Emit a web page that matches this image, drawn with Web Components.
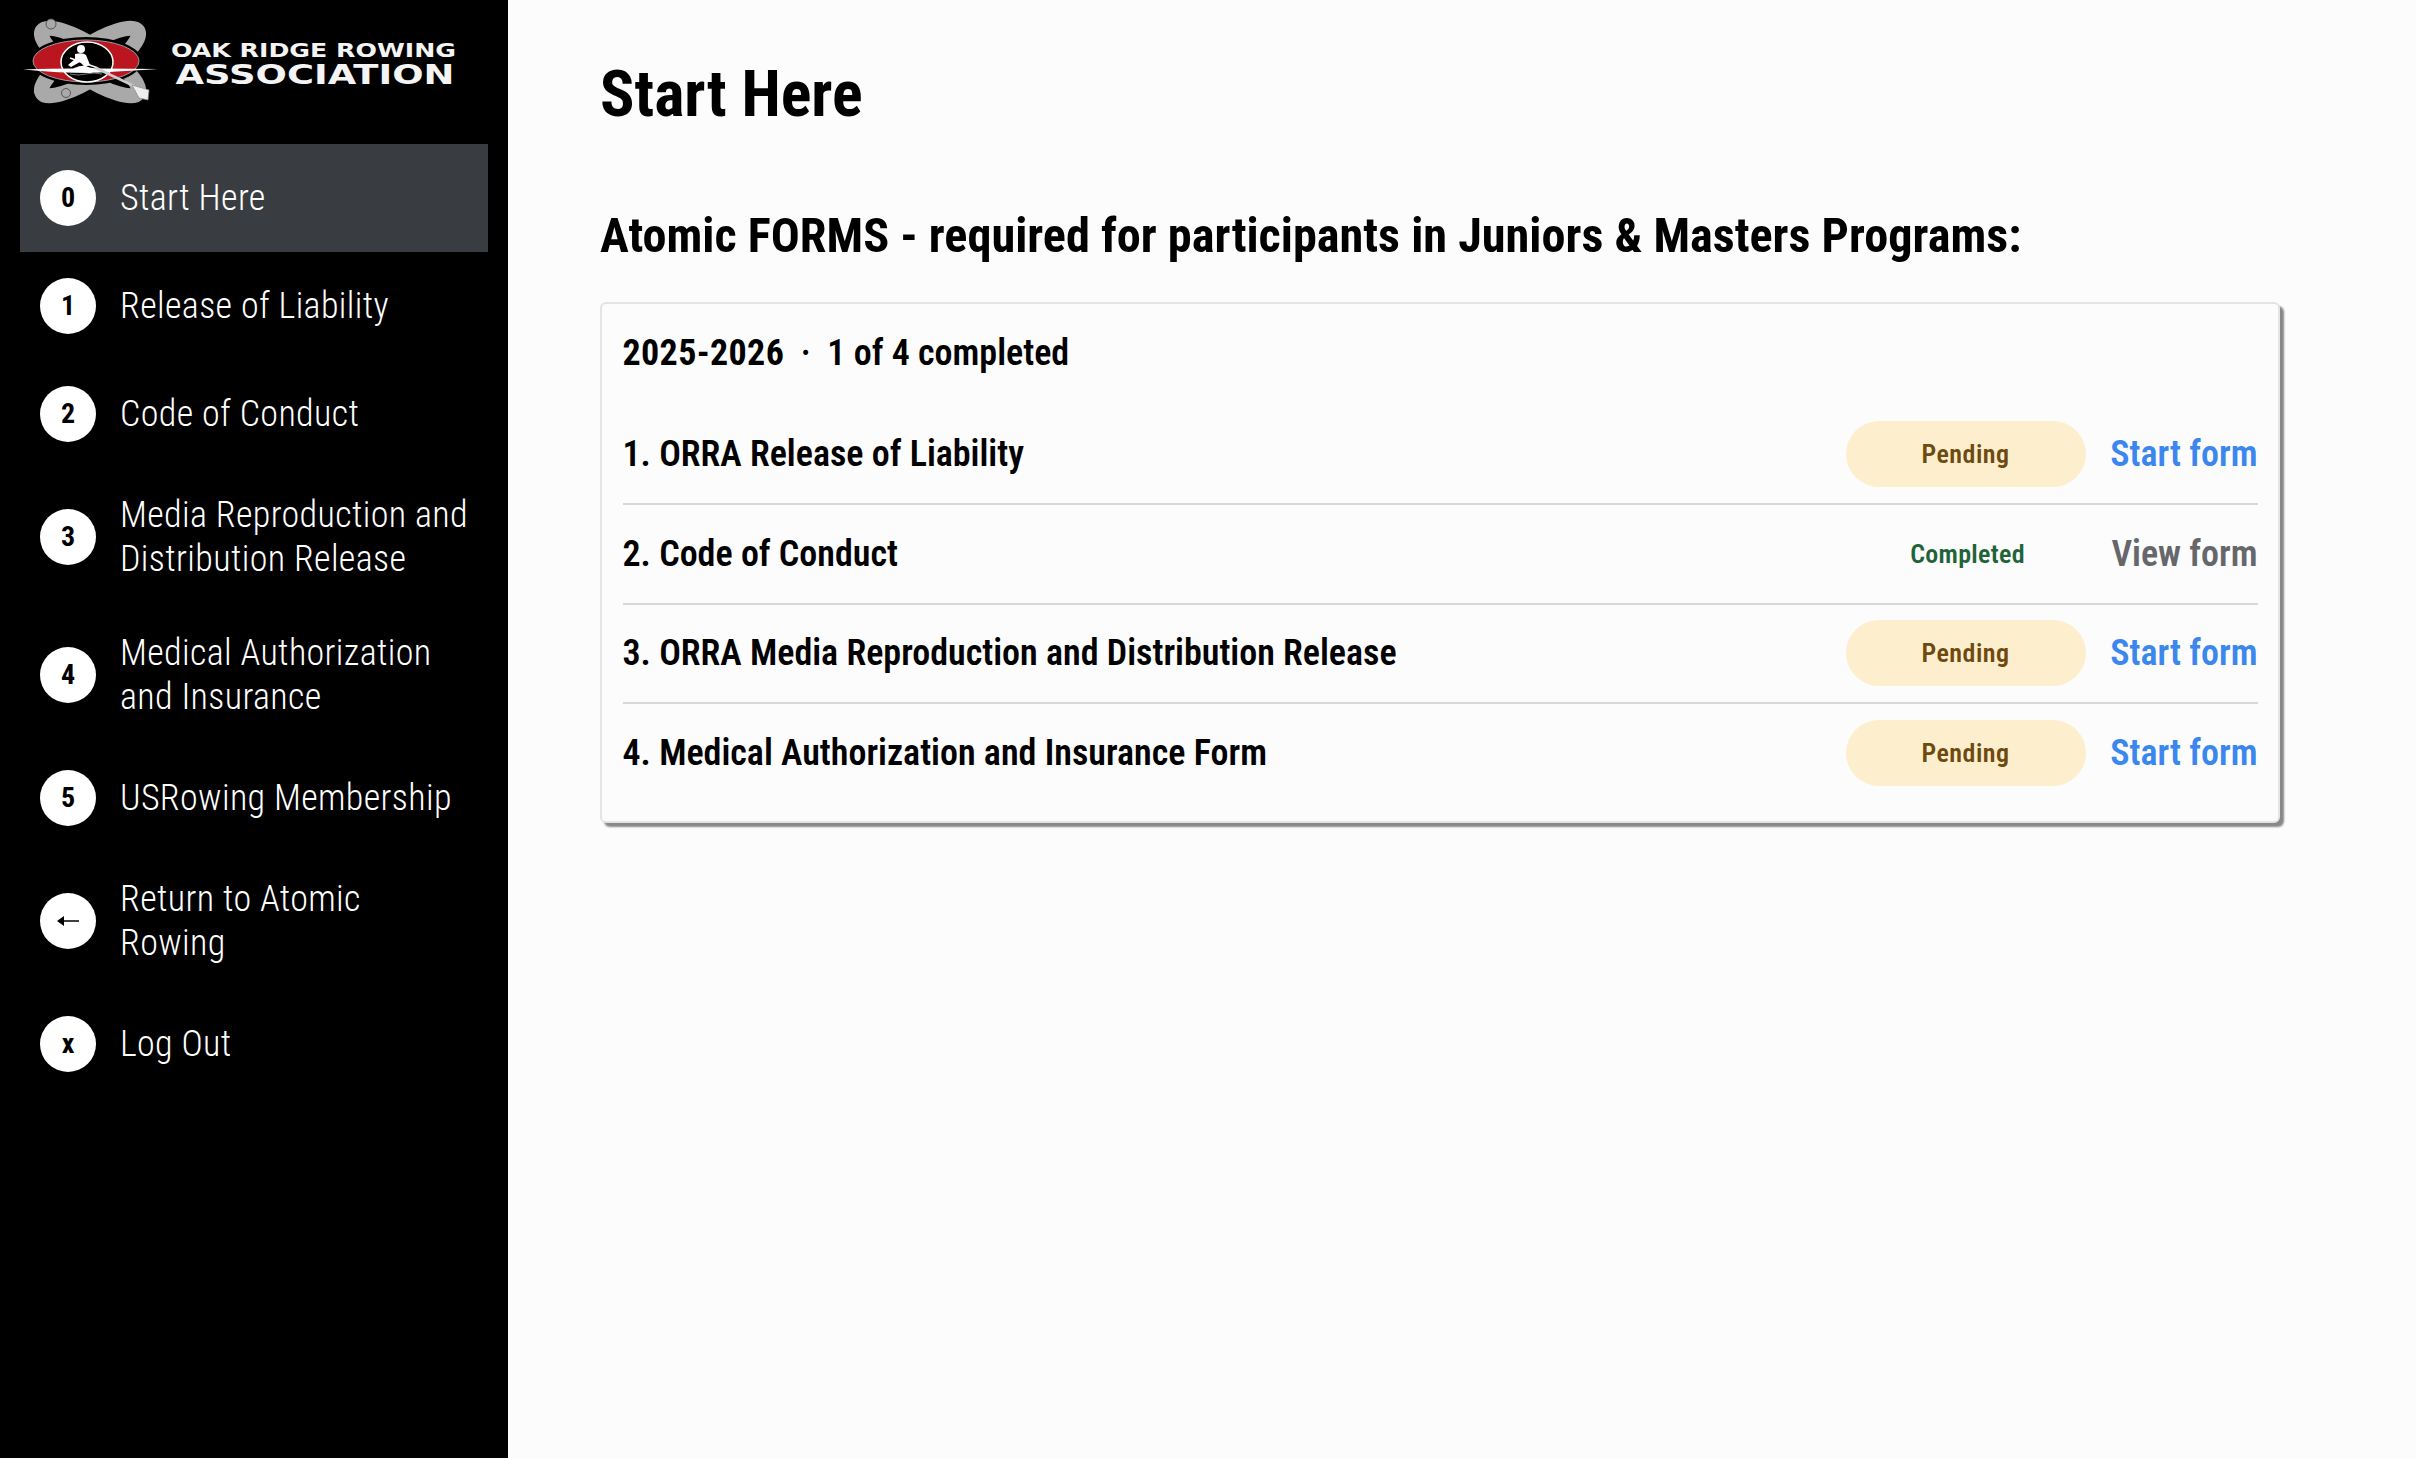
<!DOCTYPE html>
<html lang="en"><head><meta charset="utf-8"><title>Start Here</title>
<style>
html,body{margin:0;background:#fcfcfc}
body{font-family:"Roboto Condensed",Roboto,"Liberation Sans",sans-serif;font-stretch:75%;color:#000}
</style></head><body>
<app-shell>
  <side-bar slot="side">
    <brand-logo></brand-logo>
    <nav-item mark="0" active>Start Here</nav-item>
    <nav-item mark="1">Release of Liability</nav-item>
    <nav-item mark="2">Code of Conduct</nav-item>
    <nav-item mark="3">Media Reproduction and Distribution Release</nav-item>
    <nav-item mark="4">Medical Authorization and Insurance</nav-item>
    <nav-item mark="5">USRowing Membership</nav-item>
    <nav-item arrow>Return to Atomic Rowing</nav-item>
    <nav-item mark="x">Log Out</nav-item>
  </side-bar>
  <page-head>Start Here</page-head>
  <section-head>Atomic FORMS - required for participants in Juniors &amp; Masters Programs:</section-head>
  <forms-card year="2025-2026" summary="1 of 4 completed">
    <form-row status="Pending" action="Start form">1. ORRA Release of Liability</form-row>
    <form-row status="Completed" action="View form">2. Code of Conduct</form-row>
    <form-row status="Pending" action="Start form">3. ORRA Media Reproduction and Distribution Release</form-row>
    <form-row status="Pending" action="Start form" last>4. Medical Authorization and Insurance Form</form-row>
  </forms-card>
</app-shell>
<script>
function def(name,html,init){customElements.define(name,class extends HTMLElement{constructor(){super();const r=this.attachShadow({mode:'open'});r.innerHTML=html;init&&init(this,r);}});}
def('app-shell',`<style>:host{display:grid;grid-template-columns:508px 1fr;height:1458px;overflow:hidden}
main{padding:57px 136px 0 92px;display:flex;flex-direction:column}</style>
<slot name="side"></slot><main><slot></slot></main>`);
def('side-bar',`<style>:host{display:block;background:#000;padding:0 20px;box-sizing:border-box;height:1458px}</style><slot></slot>`);
def('brand-logo',`<style>:host{display:block;height:144px;margin:0 -20px}svg{display:block}</style>
<svg width="508" height="120" viewBox="0 0 508 120">
<g fill="none" stroke="#a9a9a9" stroke-width="15">
<ellipse cx="90" cy="62" rx="57" ry="16" transform="rotate(33 90 62)"/>
<ellipse cx="90" cy="62" rx="57" ry="16" transform="rotate(-33 90 62)"/>
</g>
<circle cx="51" cy="24" r="5" fill="#a9a9a9" stroke="#555"/><circle cx="66" cy="93" r="4.5" fill="#a9a9a9" stroke="#555"/>
<ellipse cx="86" cy="61" rx="56" ry="24" fill="#000"/>
<ellipse cx="86" cy="61" rx="53" ry="21" fill="#bb1620" stroke="#999" stroke-width="1"/>
<ellipse cx="87" cy="62" rx="26" ry="20" fill="#000" stroke="#fff" stroke-width="1.5"/>
<circle cx="81" cy="49" r="4" fill="#fff"/>
<path d="M75 54q8-2 11 1l4 10-5 2-5-5-9 5-3-2 7-6z" fill="#fff"/>
<path d="M70 58l28 10" stroke="#fff" stroke-width="1.5" fill="none"/>
<path d="M23 69.500q30-1 50-1 6-3 12-3 4 3 14 3 q30 0 59 .5 q-40 2.500-68 4 q-30 0-67-3.500z" fill="#fff"/>
<path d="M96 68l38 18" stroke="#ccc" stroke-width="2.500" fill="none"/>
<path d="M132 85l17 5-1 10-9-2z" fill="#eee" stroke="#888" stroke-width=".7"/>
<path d="M70 74q8 2 16 0t16 0" stroke="#777" fill="none"/>
<text x="171" y="57" font-family="DejaVu Sans" font-weight="700" font-size="19" fill="#f4f4f4" textLength="285" lengthAdjust="spacingAndGlyphs" style="font-stretch:normal">OAK RIDGE ROWING</text>
<text x="175.500" y="84" font-family="DejaVu Sans" font-weight="700" font-size="26" fill="#f4f4f4" textLength="279" lengthAdjust="spacingAndGlyphs" style="font-stretch:normal">ASSOCIATION</text>
</svg>`);
def('nav-item',`<style>:host{display:flex;align-items:center;gap:24px;padding:25px 17px 25px 20px;color:#fff;font-size:36px;font-weight:300;letter-spacing:.36px;line-height:44px;min-height:58px}
:host([active]){background:#393d41}
.m{flex:none;width:56px;height:56px;border-radius:50%;background:#fff;color:#000;display:flex;align-items:center;justify-content:center;font-weight:700;font-size:28px;letter-spacing:0;line-height:1}</style>
<span class="m"></span><span><slot></slot></span>`,(h,r)=>{const m=r.querySelector('.m');if(h.hasAttribute('arrow'))m.innerHTML='<svg width="24" height="14" viewBox="0 0 24 14" role="img" aria-label="back"><path d="M23 6.200H8V2L1 7l7 5V7.800h15z" fill="#000"/></svg>';else m.textContent=h.getAttribute('mark')});
def('page-head',`<style>:host{display:block;font-size:64px;font-weight:700;line-height:76px;margin-bottom:75px}</style><slot></slot>`);
def('section-head',`<style>:host{display:block;font-size:48.250px;font-weight:700;line-height:56px;margin-bottom:38px}</style><slot></slot>`);
def('forms-card',`<style>:host{display:block;box-sizing:border-box;background:#fcfcfc;border:2px solid #e4e4e4;border-radius:6px;box-shadow:4px 4px 2px #888;padding:21px 20.500px 19px}
h3{margin:0 0 24px;font-size:36px;font-weight:600;line-height:56px;white-space:pre}
.y{font-weight:700;letter-spacing:.35px}</style><h3><span class="y"></span><span>  ·  </span><span class="z"></span></h3><slot></slot>`,(h,r)=>{r.querySelector('.y').textContent=h.getAttribute('year');r.querySelector('.z').textContent=h.getAttribute('summary')});
def('form-row',`<style>:host{display:flex;align-items:center;height:97.800px;border-bottom:2px solid #d8d8d8;font-size:36px;font-weight:600}
:host([last]){border-bottom:none}
.l{flex:1}
.s{width:240px;height:66px;border-radius:33px;display:flex;align-items:center;justify-content:center;font-size:26px;letter-spacing:.5px}
.s.Pending{background:#fdefcd;color:#6e4a10}.s.Completed{color:#1f6338;padding-left:4px;box-sizing:border-box;letter-spacing:.3px}
a{width:172px;text-align:right;color:#3b87ee}a.v{color:#66676b}</style>
<span class="l"><slot></slot></span><span class="s"></span><a></a>`,(h,r)=>{const s=r.querySelector('.s'),a=r.querySelector('a'),st=h.getAttribute('status');s.textContent=st;s.classList.add(st);a.textContent=h.getAttribute('action');if(st==='Completed')a.classList.add('v')});
</script>
</body></html>
